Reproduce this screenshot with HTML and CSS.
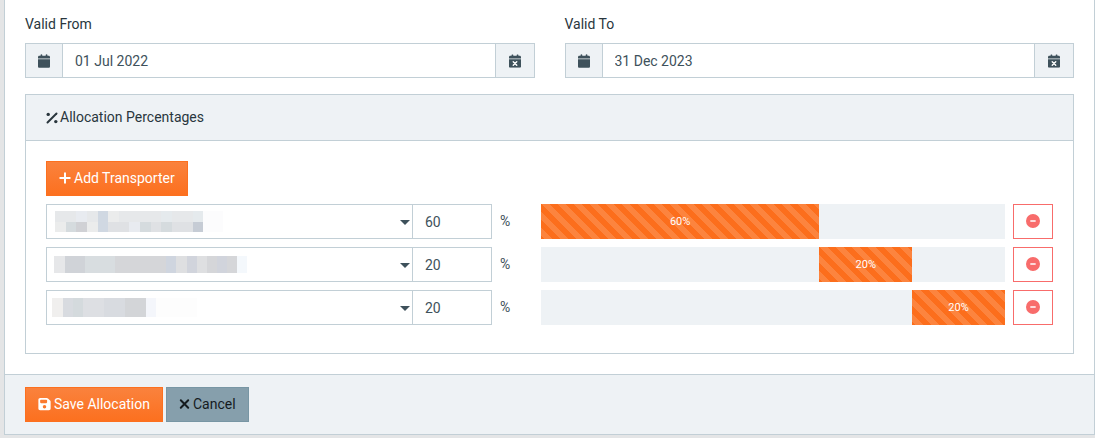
FILE: index.html
```html
<!DOCTYPE html>
<html lang="en">
<head>
    <meta charset="UTF-8">
    <meta name="viewport" content="width=device-width, initial-scale=1.0">
    <title>Allocation</title>
    <link rel="stylesheet" href="styles.css">
</head>
<body>
    <svg class="sprite" aria-hidden="true">
        <symbol id="calendar" viewBox="0 0 448 512">
            <path d="M96 32V64H48C21.5 64 0 85.5 0 112v48H448V112c0-26.5-21.5-48-48-48H352V32c0-17.7-14.3-32-32-32s-32 14.3-32 32V64H160V32c0-17.7-14.3-32-32-32S96 14.3 96 32zM448 192H0V464c0 26.5 21.5 48 48 48H400c26.5 0 48-21.5 48-48V192z"/>
        </symbol>
        <symbol id="calendar-clear" viewBox="0 0 448 512">
            <use href="#calendar" width="448" height="512"/>
            <path d="M158 286l132 132M290 286L158 418" fill="none" stroke="#fff" stroke-width="52" stroke-linecap="round"/>
        </symbol>
        <symbol id="percent" viewBox="0 0 12 12">
            <path d="M1.5 10.5l9-9" stroke="currentColor" stroke-width="2" stroke-linecap="round"/>
            <circle cx="2.2" cy="2.4" r="1.7"/>
            <circle cx="9.8" cy="9.6" r="1.7"/>
        </symbol>
        <symbol id="plus" viewBox="0 0 12 14">
            <path d="M6 1.5v11M.5 7h11" stroke="currentColor" stroke-width="2"/>
        </symbol>
        <symbol id="minus" viewBox="0 0 14 14">
            <path fill-rule="evenodd" d="M7 0a7 7 0 1 1 0 14A7 7 0 0 1 7 0zM4.9 6.2a.8.8 0 0 0 0 1.600h4.200a.8.8 0 0 0 0-1.600z"/>
        </symbol>
        <symbol id="save" viewBox="0 0 448 512">
            <path d="M64 32C28.7 32 0 60.7 0 96V416c0 35.3 28.7 64 64 64H384c35.3 0 64-28.7 64-64V173.3c0-17-6.7-33.3-18.7-45.3L352 50.7C340 38.7 323.7 32 306.7 32H64zm0 96c0-17.7 14.3-32 32-32H288c17.7 0 32 14.3 32 32v64c0 17.7-14.3 32-32 32H96c-17.7 0-32-14.3-32-32V128zM224 288a64 64 0 1 1 0 128 64 64 0 1 1 0-128z"/>
        </symbol>
        <symbol id="cross" viewBox="0 0 10 14">
            <path d="M1.3 3.3l7.400 7.400M8.700 3.300l-7.400 7.400" stroke="currentColor" stroke-width="2" stroke-linecap="round"/>
        </symbol>
    </svg>

    <form class="card">
        <div class="card-body">
            <div class="dates">
                <div class="form-group">
                    <label for="valid-from">Valid From</label>
                    <div class="input-group">
                        <span class="addon"><svg class="icon"><use href="#calendar"/></svg></span>
                        <input type="text" class="form-control" id="valid-from" value="01 Jul 2022">
                        <button type="button" class="addon addon-clear" aria-label="Clear valid from"><svg class="icon"><use href="#calendar-clear"/></svg></button>
                    </div>
                </div>
                <div class="form-group">
                    <label for="valid-to">Valid To</label>
                    <div class="input-group">
                        <span class="addon"><svg class="icon"><use href="#calendar"/></svg></span>
                        <input type="text" class="form-control" id="valid-to" value="31 Dec 2023">
                        <button type="button" class="addon addon-clear" aria-label="Clear valid to"><svg class="icon"><use href="#calendar-clear"/></svg></button>
                    </div>
                </div>
            </div>

            <section class="panel">
                <h2 class="panel-header"><svg class="icon icon-percent"><use href="#percent"/></svg>Allocation Percentages</h2>
                <div class="panel-body">
                    <button type="button" class="btn btn-primary"><svg class="icon"><use href="#plus"/></svg>Add Transporter</button>

                    <div class="allocation">
                        <div class="input-group">
                            <div class="select">
                                <select class="form-control" aria-label="Transporter 1"><option></option></select>
                                <svg class="mask" viewBox="0 0 210 33" aria-hidden="true" shape-rendering="crispEdges">
                                    <path fill="#e6e8ea" d="M8 6h148v11H8z"/>
                                    <path fill="#dfe1e4" d="M8 17h148v10H8z"/>
                                    <path fill="#e8ebf0" d="M29 6h11v11H29zM93 17h-11v10h11z"/>
                                    <path fill="#d0d8e2" d="M51 6h10v21H51z"/>
                                    <path fill="#e5eaed" d="M114 6h11v11h-11zM146 6h10v11h-10z"/>
                                    <path fill="#ebecec" d="M61 6h11v11H61zM8 17h11v10H8zM40 17h11v10H40z"/>
                                    <path fill="#d5dbde" d="M19 17h10v10H19zM93 17h11v10H93zM114 17h11v10h-11z"/>
                                    <path fill="#d0d1d5" d="M29 17h11v10H29z"/>
                                    <path fill="#c6ccd5" d="M146 17h10v10h-10z"/>
                                    <path fill="#fcfcfd" d="M156 6h20v21h-20z"/>
                                </svg>
                                <svg class="caret" viewBox="0 0 10 5" aria-hidden="true"><path d="M0 0h10L5 5z"/></svg>
                            </div>
                            <input type="text" class="form-control percent" aria-label="Percentage 1" value="60">
                        </div>
                        <span class="unit">%</span>
                        <div class="progress"><div class="bar" style="width: 60%">60%</div></div>
                        <button type="button" class="btn btn-remove" aria-label="Remove transporter 1"><svg class="icon"><use href="#minus"/></svg></button>
                    </div>

                    <div class="allocation">
                        <div class="input-group">
                            <div class="select">
                                <select class="form-control" aria-label="Transporter 2"><option></option></select>
                                <svg class="mask" viewBox="0 0 210 33" aria-hidden="true" shape-rendering="crispEdges">
                                    <path fill="#e6e7e9" d="M7 8h11v17H7z"/>
                                    <path fill="#d5d6d9" d="M18 8h172v17H18z"/>
                                    <path fill="#d0d3d8" d="M18 8h20v17H18z"/>
                                    <path fill="#d8dde0" d="M38 8h30v17H38z"/>
                                    <path fill="#cfd5df" d="M119 8h10v17h-10z"/>
                                    <path fill="#dedfe1" d="M129 8h11v17h-11zM150 8h10v17h-10z"/>
                                    <path fill="#d1d4dc" d="M140 8h10v17h-10zM170 8h10v17h-10z"/>
                                    <path fill="#f4f8fc" d="M190 8h10v17h-10z"/>
                                </svg>
                                <svg class="caret" viewBox="0 0 10 5" aria-hidden="true"><path d="M0 0h10L5 5z"/></svg>
                            </div>
                            <input type="text" class="form-control percent" aria-label="Percentage 2" value="20">
                        </div>
                        <span class="unit">%</span>
                        <div class="progress"><div class="bar" style="margin-left: 60%; width: 20%">20%</div></div>
                        <button type="button" class="btn btn-remove" aria-label="Remove transporter 2"><svg class="icon"><use href="#minus"/></svg></button>
                    </div>

                    <div class="allocation">
                        <div class="input-group">
                            <div class="select">
                                <select class="form-control" aria-label="Transporter 3"><option></option></select>
                                <svg class="mask" viewBox="0 0 210 33" aria-hidden="true" shape-rendering="crispEdges">
                                    <path fill="#f0efee" d="M5 7h11v19H5z"/>
                                    <path fill="#d8dbe0" d="M16 7h83v19H16z"/>
                                    <path fill="#d4dadd" d="M26 7h10v19H26z"/>
                                    <path fill="#dddfe3" d="M36 7h21v19H36z"/>
                                    <path fill="#d3d5d8" d="M78 7h21v19H78z"/>
                                    <path fill="#f4f6fb" d="M99 7h10v19H99z"/>
                                    <path fill="#fdfdfd" d="M109 7h41v19h-41z"/>
                                </svg>
                                <svg class="caret" viewBox="0 0 10 5" aria-hidden="true"><path d="M0 0h10L5 5z"/></svg>
                            </div>
                            <input type="text" class="form-control percent" aria-label="Percentage 3" value="20">
                        </div>
                        <span class="unit">%</span>
                        <div class="progress"><div class="bar" style="margin-left: 80%; width: 20%">20%</div></div>
                        <button type="button" class="btn btn-remove" aria-label="Remove transporter 3"><svg class="icon"><use href="#minus"/></svg></button>
                    </div>
                </div>
            </section>
        </div>

        <div class="card-footer">
            <button type="submit" class="btn btn-primary"><svg class="icon icon-save"><use href="#save"/></svg>Save Allocation</button>
            <button type="button" class="btn btn-secondary"><svg class="icon icon-cross"><use href="#cross"/></svg>Cancel</button>
        </div>
    </form>
</body>
</html>
```
FILE: styles.css
```css
* {
    box-sizing: border-box;
}

body {
    margin: 0;
    padding: 0 0 3px 4px;
    background-color: #e4e5e6;
    font-family: Roboto, sans-serif;
    font-size: 14px;
    line-height: 21px;
    color: #29363d;
}

.sprite {
    display: none;
}

.icon {
    flex: none;
    width: 12px;
    height: 14px;
    fill: currentColor;
}

.card {
    background-color: #fff;
    border: 1px solid #c2cfd6;
    border-top: none;
}

.card-body {
    padding: 14px 20px 20px;
}

.dates {
    display: grid;
    grid-template-columns: 1fr 1fr;
    gap: 30px;
}

label {
    display: block;
    margin-bottom: 8px;
}

.input-group {
    display: flex;
}

.form-control {
    flex: 1;
    min-width: 0;
    height: 35px;
    padding: 0 12px;
    background-color: #fff;
    border: 1px solid #c2cfd6;
    border-radius: 0;
    font: inherit;
    color: #3e515b;
}

.addon {
    display: flex;
    align-items: center;
    justify-content: center;
    width: 37px;
    height: 35px;
    padding: 0;
    background-color: #eef2f5;
    border: 1px solid #c2cfd6;
    border-right: none;
    color: #3e515b;
}

.addon-clear {
    width: 39px;
    border-left: none;
    border-right: 1px solid #c2cfd6;
}

/* Allocation panel */
.panel {
    margin-top: 16px;
    border: 1px solid #c2cfd6;
}

.panel-header {
    display: flex;
    align-items: center;
    gap: 2px;
    margin: 0;
    padding: 12px 20px;
    background-color: #eef2f5;
    border-bottom: 1px solid #c2cfd6;
    font-size: 14px;
    font-weight: normal;
}

.icon-percent {
    height: 12px;
}

.panel-body {
    padding: 20px 20px 28px;
}

.btn {
    display: inline-flex;
    align-items: center;
    justify-content: center;
    gap: 3px;
    height: 35px;
    padding: 0 12px;
    border: 1px solid;
    border-radius: 0;
    font: inherit;
    cursor: pointer;
}

.btn .icon {
    margin-bottom: 2px;
}

.btn-primary {
    background: linear-gradient(#fa823d, #fc701f);
    border-color: #fc701f;
    color: #fff;
}

.btn-secondary {
    background-color: #869fac;
    border-color: #7896a4;
    color: #151b1e;
}

.btn-remove {
    width: 40px;
    padding: 0;
    background-color: #fff;
    border-color: #f86c6b;
    color: #f86c6b;
}

.btn-remove .icon {
    width: 14px;
}

.icon-save {
    width: 13px;
}

.icon-cross {
    width: 11px;
}

.allocation {
    display: flex;
    align-items: flex-start;
    margin-top: 8px;
}

.allocation .input-group {
    flex: 49;
}

.select {
    position: relative;
    display: flex;
    flex: 1;
}

.select select {
    appearance: none;
}

.mask {
    position: absolute;
    top: 1px;
    left: 1px;
    width: 210px;
    height: 33px;
    pointer-events: none;
}

.caret {
    position: absolute;
    top: 16px;
    right: 3px;
    width: 10px;
    height: 5px;
    fill: #3e515b;
    pointer-events: none;
}

.percent {
    flex: none;
    width: 80px;
    margin-left: -1px;
}

.unit {
    flex: none;
    width: 49px;
    padding: 7px 8px;
    color: #3e515b;
}

.progress {
    flex: 51;
    height: 35px;
    margin-right: 8px;
    background-color: #eef2f5;
}

.bar {
    height: 35px;
    background-color: #fc6e1c;
    background-image: linear-gradient(45deg, rgba(255, 255, 255, 0.15) 25%, transparent 25%, transparent 50%, rgba(255, 255, 255, 0.15) 50%, rgba(255, 255, 255, 0.15) 75%, transparent 75%, transparent);
    background-size: 16px 16px;
    font-size: 11px;
    line-height: 35px;
    text-align: center;
    color: #fff;
}

.card-footer {
    display: flex;
    gap: 3px;
    padding: 12px 20px;
    background-color: #eef2f5;
    border-top: 1px solid #c2cfd6;
}
```
